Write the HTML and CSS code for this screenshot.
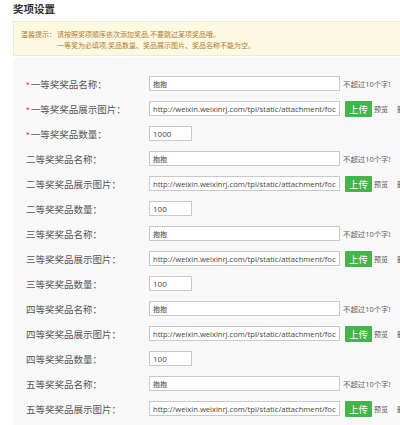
FILE: index.html
```html
<!DOCTYPE html>
<html>
<head>
  <meta charset="utf-8">
  <title>奖项设置</title>
  <link rel="stylesheet" href="styles.css">
</head>
<body>
  <div class="page">
    <h2 class="title">奖项设置</h2>

    <div class="notice">
      <span class="notice-head">温馨提示：</span>
      <div class="notice-body">
        <p>请按照奖项顺序依次添加奖品,不要跳过某项奖品哦。</p>
        <p>一等奖为必填项,奖品数量、奖品展示图片、奖品名称不能为空。</p>
      </div>
    </div>

    <form class="panel">
      <div class="row">
        <label class="label"><span class="req">*</span>一等奖奖品名称：</label>
        <input type="text" class="txt" value="抱抱">
        <span class="hint">不超过10个字!</span>
      </div>
      <div class="row">
        <label class="label"><span class="req">*</span>一等奖奖品展示图片：</label>
        <input type="text" class="txt url" value="http://weixin.weixinrj.com/tpl/static/attachment/focus/default.jpg">
        <button type="button" class="upload">上传</button>
        <a class="link">预览</a>
        <a class="link del">删除</a>
      </div>
      <div class="row">
        <label class="label"><span class="req">*</span>一等奖奖品数量：</label>
        <input type="text" class="num" value="1000">
      </div>

      <div class="row">
        <label class="label">二等奖奖品名称：</label>
        <input type="text" class="txt" value="抱抱">
        <span class="hint">不超过10个字!</span>
      </div>
      <div class="row">
        <label class="label">二等奖奖品展示图片：</label>
        <input type="text" class="txt url" value="http://weixin.weixinrj.com/tpl/static/attachment/focus/default.jpg">
        <button type="button" class="upload">上传</button>
        <a class="link">预览</a>
        <a class="link del">删除</a>
      </div>
      <div class="row">
        <label class="label">二等奖奖品数量：</label>
        <input type="text" class="num" value="100">
      </div>

      <div class="row">
        <label class="label">三等奖奖品名称：</label>
        <input type="text" class="txt" value="抱抱">
        <span class="hint">不超过10个字!</span>
      </div>
      <div class="row">
        <label class="label">三等奖奖品展示图片：</label>
        <input type="text" class="txt url" value="http://weixin.weixinrj.com/tpl/static/attachment/focus/default.jpg">
        <button type="button" class="upload">上传</button>
        <a class="link">预览</a>
        <a class="link del">删除</a>
      </div>
      <div class="row">
        <label class="label">三等奖奖品数量：</label>
        <input type="text" class="num" value="100">
      </div>

      <div class="row">
        <label class="label">四等奖奖品名称：</label>
        <input type="text" class="txt" value="抱抱">
        <span class="hint">不超过10个字!</span>
      </div>
      <div class="row">
        <label class="label">四等奖奖品展示图片：</label>
        <input type="text" class="txt url" value="http://weixin.weixinrj.com/tpl/static/attachment/focus/default.jpg">
        <button type="button" class="upload">上传</button>
        <a class="link">预览</a>
        <a class="link del">删除</a>
      </div>
      <div class="row">
        <label class="label">四等奖奖品数量：</label>
        <input type="text" class="num" value="100">
      </div>

      <div class="row">
        <label class="label">五等奖奖品名称：</label>
        <input type="text" class="txt" value="抱抱">
        <span class="hint">不超过10个字!</span>
      </div>
      <div class="row">
        <label class="label">五等奖奖品展示图片：</label>
        <input type="text" class="txt url" value="http://weixin.weixinrj.com/tpl/static/attachment/focus/default.jpg">
        <button type="button" class="upload">上传</button>
        <a class="link">预览</a>
        <a class="link del">删除</a>
      </div>
      <div class="row">
        <label class="label">五等奖奖品数量：</label>
        <input type="text" class="num" value="100">
      </div>
    </form>
  </div>
</body>
</html>
```

FILE: styles.css
```css
html,
body {
  margin: 0;
  height: 100%;
  overflow: hidden;
  background-color: #fff;
}

body {
  font-family: "Noto Sans", "Noto Sans CJK SC", sans-serif;
  color: #555;
}

.page {
  width: 520px;
  padding-left: 13px;
}

.title {
  margin: 0;
  padding-top: 3px;
  height: 18px;
  font-size: 10.5px;
  line-height: 13px;
  font-weight: bold;
  color: #333;
}

.notice {
  display: flex;
  height: 35px;
  box-sizing: border-box;
  padding: 7px 0 0 7px;
  background-color: #fcf9e2;
  border: 1px solid #f1ead0;
  font-size: 7px;
  line-height: 11px;
  color: #b5792f;
}

.notice-head {
  flex: none;
  width: 36px;
}

.notice-body p {
  margin: 0;
}

.panel {
  margin-top: 2px;
  padding: 13px 0 0 13px;
  background-color: #f8f8f8;
}

.row {
  display: flex;
  align-items: center;
  height: 25px;
  white-space: nowrap;
}

.label {
  flex: none;
  width: 123px;
  font-size: 9.5px;
  color: #555;
}

.req {
  color: #e43b3b;
  font-family: Arial, sans-serif;
  margin-right: 1px;
}

.txt,
.num {
  flex: none;
  box-sizing: border-box;
  height: 15px;
  margin: 0;
  padding: 0 3px;
  border: 1px solid #c9c9c9;
  background-color: #fff;
  font-family: "Open Sans", "Noto Sans CJK SC", sans-serif;
  font-size: 7px;
  color: #444;
  outline: none;
}

.txt {
  width: 191px;
}

.url {
  font-size: 7.6px;
}

.num {
  width: 43px;
  font-size: 8px;
}

.hint {
  margin-left: 3px;
  font-size: 7.4px;
  color: #666;
}

.upload {
  flex: none;
  width: 27px;
  height: 16px;
  margin-left: 5px;
  padding: 0;
  border: none;
  border-radius: 1px;
  background-color: #44b549;
  color: #fff;
  font-family: "Noto Sans CJK SC", sans-serif;
  font-size: 9.5px;
  line-height: 16px;
  cursor: pointer;
}

.link {
  margin-left: 2px;
  font-size: 7px;
  color: #555;
}

.link.del {
  margin-left: 9px;
}
```
